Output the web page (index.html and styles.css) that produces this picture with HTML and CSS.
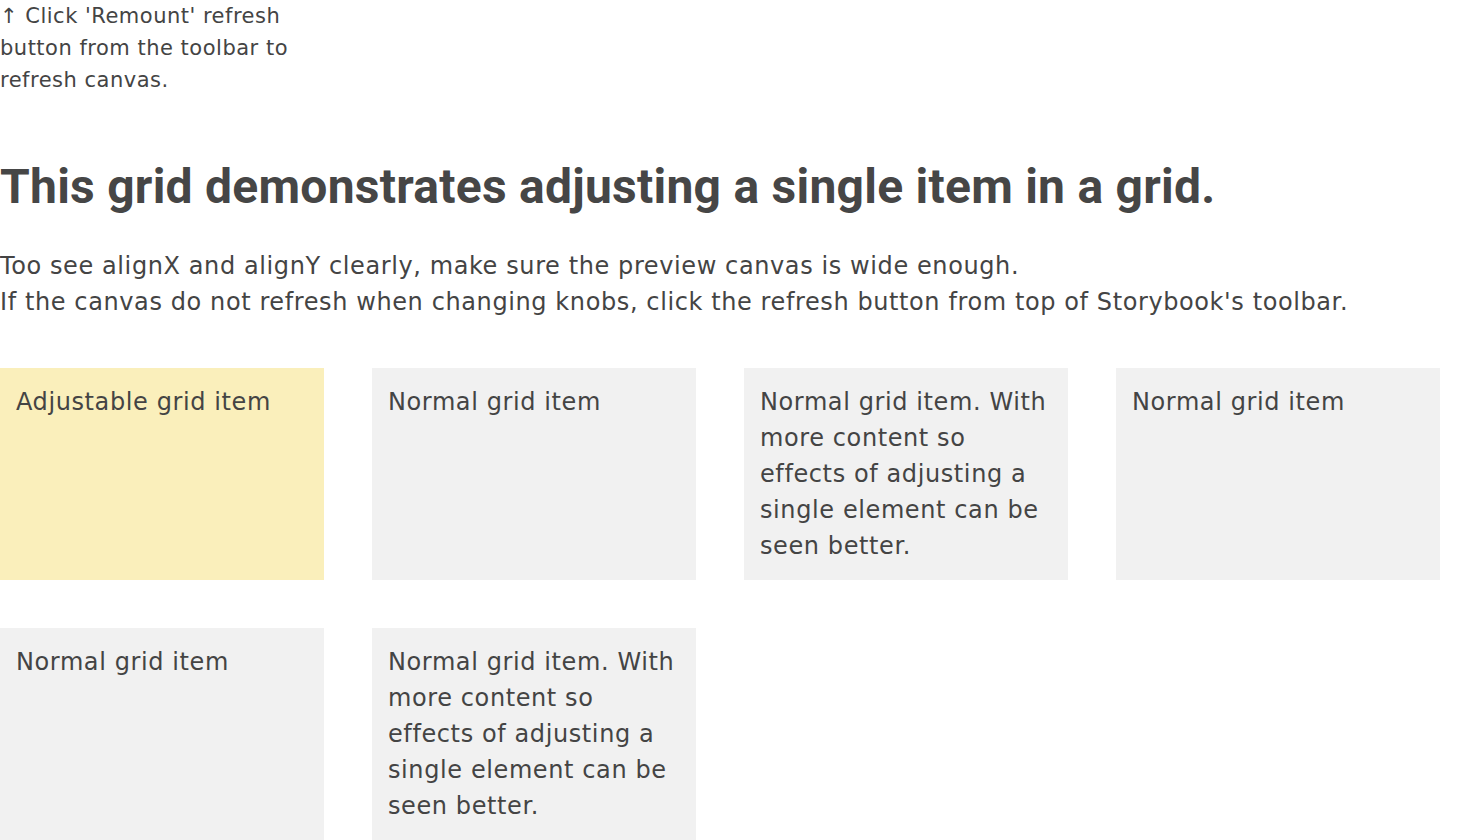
FILE: index.html
```html
<!DOCTYPE html>
<html lang="en">
<head>
<meta charset="utf-8">
<title>Grid item adjust</title>
<link rel="stylesheet" href="styles.css">
</head>
<body>
<div class="note">↑ Click 'Remount' refresh button from the toolbar to refresh canvas.</div>
<h1 class="title">This grid demonstrates adjusting a single item in a grid.</h1>
<p class="intro">Too see alignX and alignY clearly, make sure the preview canvas is wide enough.<br>If the canvas do not refresh when changing knobs, click the refresh button from top of Storybook's toolbar.</p>
<div class="grid">
  <div class="item item-adjustable">Adjustable grid item</div>
  <div class="item">Normal grid item</div>
  <div class="item">Normal grid item. With more content so effects of adjusting a single element can be seen better.</div>
  <div class="item">Normal grid item</div>
  <div class="item">Normal grid item</div>
  <div class="item">Normal grid item. With more content so effects of adjusting a single element can be seen better.</div>
</div>
</body>
</html>
```
FILE: styles.css
```css
html, body {
  margin: 0;
  padding: 0;
  background: #ffffff;
}
body {
  font-family: "DejaVu Sans", "Noto Sans", sans-serif;
  color: #444444;
}
.note {
  max-width: 300px;
  font-size: 21px;
  line-height: 32px;
  letter-spacing: 0.5px;
}
.title {
  margin: 62px 0 0;
  font-family: Roboto, "Liberation Sans", sans-serif;
  font-size: 48px;
  line-height: 58px;
  font-weight: 700;
  letter-spacing: 0.25px;
  color: #464646;
}
.intro {
  margin: 32px 0 0;
  font-size: 24px;
  line-height: 36px;
  letter-spacing: 0.6px;
}
.grid {
  margin-top: 48px;
  max-width: 1440px;
  display: grid;
  grid-template-columns: repeat(4, 1fr);
  gap: 48px;
}
.item {
  background: #f1f1f1;
  padding: 16px;
  font-size: 24px;
  line-height: 36px;
  letter-spacing: 0.6px;
}
.item-adjustable {
  background: #faefbb;
}
```
